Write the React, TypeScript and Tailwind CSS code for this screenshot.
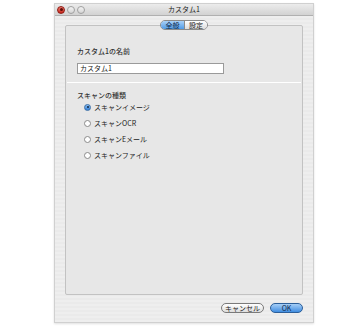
import React from 'react';

const jp = { fontFamily: '"Noto Sans CJK JP", "Liberation Sans", sans-serif' };

function Radio({ label, checked }: { label: string; checked?: boolean }) {
  return (
    <div className="flex items-center gap-[3px] h-[16px]">
      {checked ? (
        <span className="w-[7px] h-[7px] rounded-full bg-gradient-to-b from-[#8cc0f2] to-[#2f7fd8] border border-[#3a6ea8] flex items-center justify-center">
          <span className="w-[2px] h-[2px] rounded-full bg-[#10243d]" />
        </span>
      ) : (
        <span className="w-[7px] h-[7px] rounded-full bg-white border border-[#8a8a8a]" />
      )}
      <span className="text-[7px] leading-[9px] text-[#222]">{label}</span>
    </div>
  );
}

export default function App() {
  return (
    <div className="w-[360px] h-[332px] bg-white pt-[3px] pl-[54px]" style={jp}>
      {/* window */}
      <div className="w-[260px] h-[320px] flex flex-col bg-[#ececec] border border-[#d0d0d0] shadow-[0_1px_2px_rgba(0,0,0,0.12)]">
        {/* title bar */}
        <div className="relative h-[12px] flex items-center bg-gradient-to-b from-[#ececec] to-[#d2d2d2] border-b border-[#b0b0b0]">
          <div className="flex items-center gap-[2px] pl-[2px]">
            <span className="w-[8px] h-[8px] rounded-full bg-gradient-to-b from-[#f07a6f] to-[#c81f16] border border-[#8e1b14] flex items-center justify-center">
              <span className="w-[3px] h-[3px] rounded-full bg-[#5a0c08]" />
            </span>
            <span className="w-[8px] h-[8px] rounded-full bg-gradient-to-b from-[#f4f4f4] to-[#d4d4d4] border border-[#a0a0a0]" />
            <span className="w-[8px] h-[8px] rounded-full bg-gradient-to-b from-[#f4f4f4] to-[#d4d4d4] border border-[#a0a0a0]" />
          </div>
          <div className="absolute inset-0 flex items-center justify-center text-[7px] leading-none text-[#222]">
            カスタム1
          </div>
        </div>

        {/* content */}
        <div className="flex-1 flex flex-col px-[10px] pt-[4px] bg-[repeating-linear-gradient(0deg,#eeeeee_0px,#eeeeee_2px,#eaeaea_2px,#eaeaea_4px)]">
          {/* tabs */}
          <div className="relative z-10 flex justify-center h-[10px]">
            <div className="flex rounded-full border border-[#8a8a8a] overflow-hidden text-[7px] leading-[8px]">
              <span className="w-[23px] flex items-center justify-center bg-gradient-to-b from-[#a9d1f7] to-[#4f9be6] text-[#0e2a4d]">
                全般
              </span>
              <span className="w-[23px] flex items-center justify-center bg-gradient-to-b from-white to-[#dcdcdc] border-l border-[#8a8a8a] text-[#222]">
                設定
              </span>
            </div>
          </div>

          {/* group box */}
          <div className="-mt-[5px] h-[270px] border border-[#c2c2c2] rounded-[2px] bg-[#e7e7e7] flex flex-col">
            <div className="pl-[11px] pt-[21px]">
              <div className="text-[7px] leading-[9px] font-medium text-[#333]">カスタム1の名前</div>
              <div className="mt-[7px] w-[147px] h-[11px] bg-white border border-[#9a9a9a] flex items-center pl-[2px] text-[7px] text-[#222]">
                カスタム1
              </div>
            </div>
            <div className="mt-[8px] mx-[1px] h-px bg-[#a9a9a9] border-b border-white" />
            <div className="pl-[11px] pt-[8px]">
              <div className="text-[7px] leading-[9px] font-medium text-[#333]">スキャンの種類</div>
              <div className="pl-[7px] -mt-[1px] flex flex-col">
                <Radio label="スキャンイメージ" checked />
                <Radio label="スキャンOCR" />
                <Radio label="スキャンEメール" />
                <Radio label="スキャンファイル" />
              </div>
            </div>
          </div>

          {/* buttons */}
          <div className="flex justify-end items-center gap-[6px] mt-[8px]">
            <button className="w-[43px] h-[10px] rounded-full border border-[#7a7a7a] bg-gradient-to-b from-white to-[#dedede] text-[7px] leading-none text-[#222] flex items-center justify-center">
              キャンセル
            </button>
            <button className="w-[33px] h-[10px] rounded-full border border-[#2c5f9a] bg-gradient-to-b from-[#a6cff7] to-[#3f8de0] text-[7px] leading-none text-[#0e2a4d] flex items-center justify-center">
              OK
            </button>
          </div>
        </div>
      </div>
    </div>
  );
}
